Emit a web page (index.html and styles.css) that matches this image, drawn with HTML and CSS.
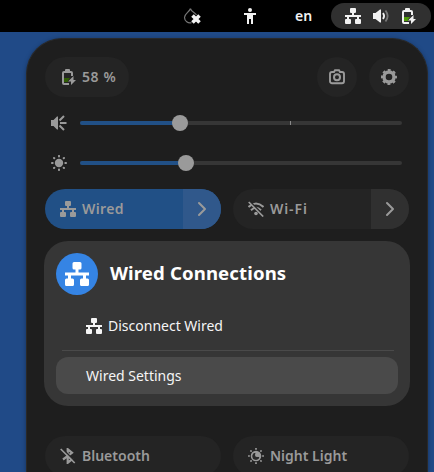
FILE: index.html
```html
<!DOCTYPE html>
<html lang="en">
<head>
<meta charset="utf-8">
<title>Quick Settings</title>
<link rel="stylesheet" href="styles.css">
</head>
<body>
<svg class="defs" width="0" height="0" aria-hidden="true">
  <symbol id="wired" viewBox="0 0 16 16">
    <path d="M6 0h4a1 1 0 0 1 1 1v3a1 1 0 0 1-1 1H9v2h7v2h-2v2h1a1 1 0 0 1 1 1v3a1 1 0 0 1-1 1h-4a1 1 0 0 1-1-1v-3a1 1 0 0 1 1-1h1V9H4v2h1a1 1 0 0 1 1 1v3a1 1 0 0 1-1 1H1a1 1 0 0 1-1-1v-3a1 1 0 0 1 1-1h1V9H0V7h7V5H6a1 1 0 0 1-1-1V1a1 1 0 0 1 1-1z"/>
  </symbol>
  <symbol id="battery" viewBox="0 0 16 16">
    <path d="M4 2V1a1 1 0 0 1 1-1h3a1 1 0 0 1 1 1v1h1a2 2 0 0 1 2 2v3h-2V4H3v10h5v2H3a2 2 0 0 1-2-2V4a2 2 0 0 1 2-2z"/>
    <path class="charge" d="M3 9h6l-2 2.500V13H3z"/>
    <path d="M12.500 7v4H15l-5 5v-3.500H7z"/>
  </symbol>
  <symbol id="chevron" viewBox="0 0 16 16">
    <path d="M5 2l6 6-6 6" fill="none" stroke="currentColor" stroke-width="2" stroke-linecap="round" stroke-linejoin="round"/>
  </symbol>
</svg>

<header class="topbar">
  <svg class="icon drop" viewBox="0 0 18 18">
    <path d="M7.500 1.500C6.500 5 1.500 6.500 1.500 10.500a5.500 5.500 0 0 0 7 5.200M7.500 1.500C8.200 5 12 5.500 13.500 8" fill="none" stroke="#777" stroke-width="1.200"/>
    <path d="M9.500 8.500l7 7M16.500 8.500l-7 7" stroke="#f2f2f2" stroke-width="3.600" fill="none"/>
  </svg>
  <svg class="icon access" viewBox="0 0 16 16">
    <circle cx="8" cy="2" r="2"/>
    <path d="M2 5h12v2h-3v9H9v-5H7v5H5V7H2z"/>
  </svg>
  <span class="lang">en</span>
  <div class="status">
    <svg class="icon"><use href="#wired"/></svg>
    <svg class="icon" viewBox="0 0 16 16">
      <path d="M0 5h2.500L7 1.500h1v13H7L2.500 11H0z"/>
      <path d="M10 5q2.200 3 0 6" fill="none" stroke="currentColor" stroke-width="1.800"/>
      <path d="M12.500 2.500q4.300 5.500 0 11" fill="none" stroke="#777" stroke-width="1.800"/>
    </svg>
    <svg class="icon"><use href="#battery"/></svg>
  </div>
</header>

<main class="panel">
  <div class="actions">
    <div class="pill"><svg class="icon"><use href="#battery"/></svg><span>58 %</span></div>
    <button class="round" aria-label="Screenshot">
      <svg class="icon" viewBox="0 0 16 16">
        <path d="M3 3h2l1-1.800h4L11 3h2a2 2 0 0 1 2 2v7.200a2 2 0 0 1-2 2H3a2 2 0 0 1-2-2V5a2 2 0 0 1 2-2z" fill="none" stroke="currentColor" stroke-width="1.900"/>
        <circle cx="8" cy="8.300" r="3" fill="none" stroke="currentColor" stroke-width="2"/>
      </svg>
    </button>
    <button class="round" aria-label="Settings">
      <svg class="icon" viewBox="0 0 16 16">
        <circle cx="8" cy="8" r="5" fill="none" stroke="currentColor" stroke-width="3.400"/>
        <circle cx="8" cy="8" r="7" fill="none" stroke="currentColor" stroke-width="2" stroke-dasharray="2.900 2.598" stroke-dashoffset="1.450"/>
      </svg>
    </button>
  </div>

  <div class="slider">
    <svg class="icon" viewBox="0 0 16 16">
      <path d="M0 5h2.500L6 1.500h1v13H6L2.500 11H0z"/>
      <path d="M8.500 5.500l4.500-4.500M9 8h6.500M8.500 10.500l4.500 4.500" fill="none" stroke="currentColor" stroke-width="2"/>
    </svg>
    <div class="track"><div class="fill volume"></div><div class="knob"></div><div class="tick"></div></div>
  </div>
  <div class="slider">
    <svg class="icon" viewBox="0 0 16 16">
      <circle cx="8" cy="8" r="4.200"/>
      <path d="M8 .9v.6M8 14.500v.6M.9 8h.8M14.300 8h.8M3 3l.3.300M12.700 12.700l.3.300M3 13l.3-.3M12.700 3.300L13 3" stroke="currentColor" stroke-width="2" stroke-linecap="round"/>
    </svg>
    <div class="track"><div class="fill brightness"></div><div class="knob"></div></div>
  </div>

  <div class="toggles">
    <div class="toggle active">
      <div class="label"><svg class="icon"><use href="#wired"/></svg><span class="wired">Wired</span></div>
      <div class="more"><svg class="icon"><use href="#chevron"/></svg></div>
    </div>
    <div class="toggle">
      <div class="label">
        <svg class="icon" viewBox="0 0 16 16">
          <path d="M.5 6Q8-1 15.500 6M3 9.200q5-4.800 10 0" fill="none" stroke="currentColor" stroke-width="2"/>
          <circle cx="8" cy="12.500" r="1.800"/>
          <path d="M1.700.5l14 14" stroke="#242424" stroke-width="2"/>
          <path d="M.7 1l14.500 14.500" stroke="currentColor" stroke-width="1.700"/>
        </svg><span class="wifi">Wi-Fi</span>
      </div>
      <div class="more"><svg class="icon"><use href="#chevron"/></svg></div>
    </div>
  </div>

  <section class="card">
    <div class="card-head">
      <div class="badge"><svg><use href="#wired"/></svg></div>
      <h1>Wired Connections</h1>
    </div>
    <div class="item"><svg class="icon"><use href="#wired"/></svg><span>Disconnect Wired</span></div>
    <hr>
    <div class="item hover"><span>Wired Settings</span></div>
  </section>

  <div class="toggles lower">
    <div class="toggle">
      <div class="label">
        <svg class="icon" viewBox="0 0 16 16">
          <path d="M3 11.500L12 4.800 7.700 1.200v13.600l4.300-3.600L7.500 8" fill="none" stroke="currentColor" stroke-width="2.200"/>
          <path d="M2.200.5l13 13" stroke="#242424" stroke-width="1.500"/>
          <path d="M.7 1l14 14" stroke="currentColor" stroke-width="1.700"/>
        </svg><span>Bluetooth</span>
      </div>
    </div>
    <div class="toggle">
      <div class="label">
        <svg class="icon" viewBox="0 0 16 16">
          <path fill-rule="evenodd" d="M8 2.700a5.300 5.300 0 1 1 0 10.600A5.300 5.300 0 0 1 8 2.700zM7.200 4.700a3.400 3.400 0 1 0 4.100 4.200A3 3 0 0 1 7.200 4.700z" />
          <path d="M7.500 5a3.400 3.400 0 0 0 3.700 4A3.400 3.400 0 1 1 7.500 5z" fill="#2a2a2a"/>
          <circle cx="9" cy="7" r="2"/>
          <path d="M8 .9v.1M8 15v.1M.9 8H1M15 8h.1M3 3l.1.100M12.900 12.900l.1.100M3 13l.1-.1M12.900 3.100L13 3" stroke="currentColor" stroke-width="1.700" stroke-linecap="square"/>
        </svg><span>Night Light</span>
      </div>
    </div>
  </div>
</main>
</body>
</html>
```

FILE: styles.css
```css
* { box-sizing: border-box; }

body {
  margin: 0;
  width: 434px;
  height: 472px;
  overflow: hidden;
  background: #204a87;
  font-family: "Noto Sans", sans-serif;
  font-size: 14px;
}

.defs { display: block; height: 0; }
svg { fill: currentColor; flex: none; }
.icon { width: 16px; height: 16px; display: block; }
.charge { fill: var(--charge, #4e9a06); }

.topbar {
  height: 32px;
  background: #000;
  color: #f2f2f2;
  display: flex;
  align-items: center;
  padding-right: 3px;
}
.drop { width: 18px; height: 18px; margin-left: 183px; }
.access { margin-left: 41px; }
.lang { margin-left: 37px; width: 36px; font-weight: 600; line-height: 20px; }
.status {
  flex: 1;
  height: 26px;
  border-radius: 13px;
  background: #303030;
  display: flex;
  align-items: center;
  gap: 12px;
  padding-left: 14px;
}

.panel {
  --charge: #2f5c04;
  margin: 6px 6px 0 26px;
  height: 434px;
  overflow: hidden;
  padding: 18px 18px 0;
  border: solid #292929;
  border-width: 1px 1px 0;
  border-radius: 36px 36px 0 0;
  background: #1e1e1e;
  color: #9a9a9a;
  box-shadow: 0 1px 4px rgba(0, 0, 0, .35);
}

.actions { display: flex; gap: 12px; height: 40px; }
.pill, .round { height: 40px; background: #242424; border-radius: 20px; color: inherit; }
.pill {
  width: 84px;
  margin-right: auto;
  display: flex;
  align-items: center;
  gap: 5px;
  padding-left: 16px;
  font-weight: 600;
  letter-spacing: .6px;
}
.pill span, .label span { padding-bottom: 2px; }
.round { width: 40px; border: 0; padding: 0; display: grid; place-items: center; }

.slider {
  height: 40px;
  padding: 0 7px 0 6px;
  display: flex;
  align-items: center;
  gap: 13px;
}
.actions + .slider { margin-top: 6px; }
.track {
  position: relative;
  flex: 1;
  height: 4px;
  display: flex;
  align-items: center;
  border-radius: 2px;
  background: #363636;
}
.fill { height: 4px; border-radius: 2px; background: #215086; }
.volume { width: 99.600px; }
.brightness { width: 105.500px; }
.knob { width: 16px; height: 16px; margin-left: -8px; border-radius: 50%; background: #9a9a9a; }
.tick { position: absolute; left: 210px; top: 0; width: 1px; height: 4px; background: #8a8a8a; }

.toggles { display: grid; grid-template-columns: 176px 176px; gap: 12px; margin-top: 6px; }
.toggle {
  height: 40px;
  border-radius: 20px;
  overflow: hidden;
  display: flex;
  background: #242424;
  font-weight: 600;
}
.label { flex: 1; display: flex; align-items: center; gap: 6px; padding-left: 15px; }
.wired { letter-spacing: .35px; }
.wifi { letter-spacing: .9px; }
.more { width: 38px; display: grid; place-items: center; background: #303030; }
.active { background: #215086; }
.active .more { background: #30588b; }

.card {
  margin: 12px -1px 0;
  height: 165px;
  padding: 12px;
  border-radius: 24px;
  background: #363636;
  color: #f5f5f5;
}
.card-head { display: flex; align-items: center; gap: 12px; height: 42px; }
.badge {
  width: 42px;
  height: 42px;
  border-radius: 50%;
  background: #3584e4;
  color: #fff;
  display: grid;
  place-items: center;
}
.badge svg { width: 24px; height: 24px; }
h1 { margin: 0; padding-bottom: 2px; font-size: 18.600px; letter-spacing: .12px; line-height: 24px; font-weight: 700; color: #fff; }
.item { display: flex; align-items: center; gap: 6px; height: 37px; padding-left: 30px; border-radius: 12px; }
.card-head + .item { margin-top: 12px; }
hr { margin: 6px 4px 6px 6px; height: 1px; border: 0; background: #4a4a4a; }
.hover { background: #4a4a4a; }
.lower { margin-top: 30px; }
```
